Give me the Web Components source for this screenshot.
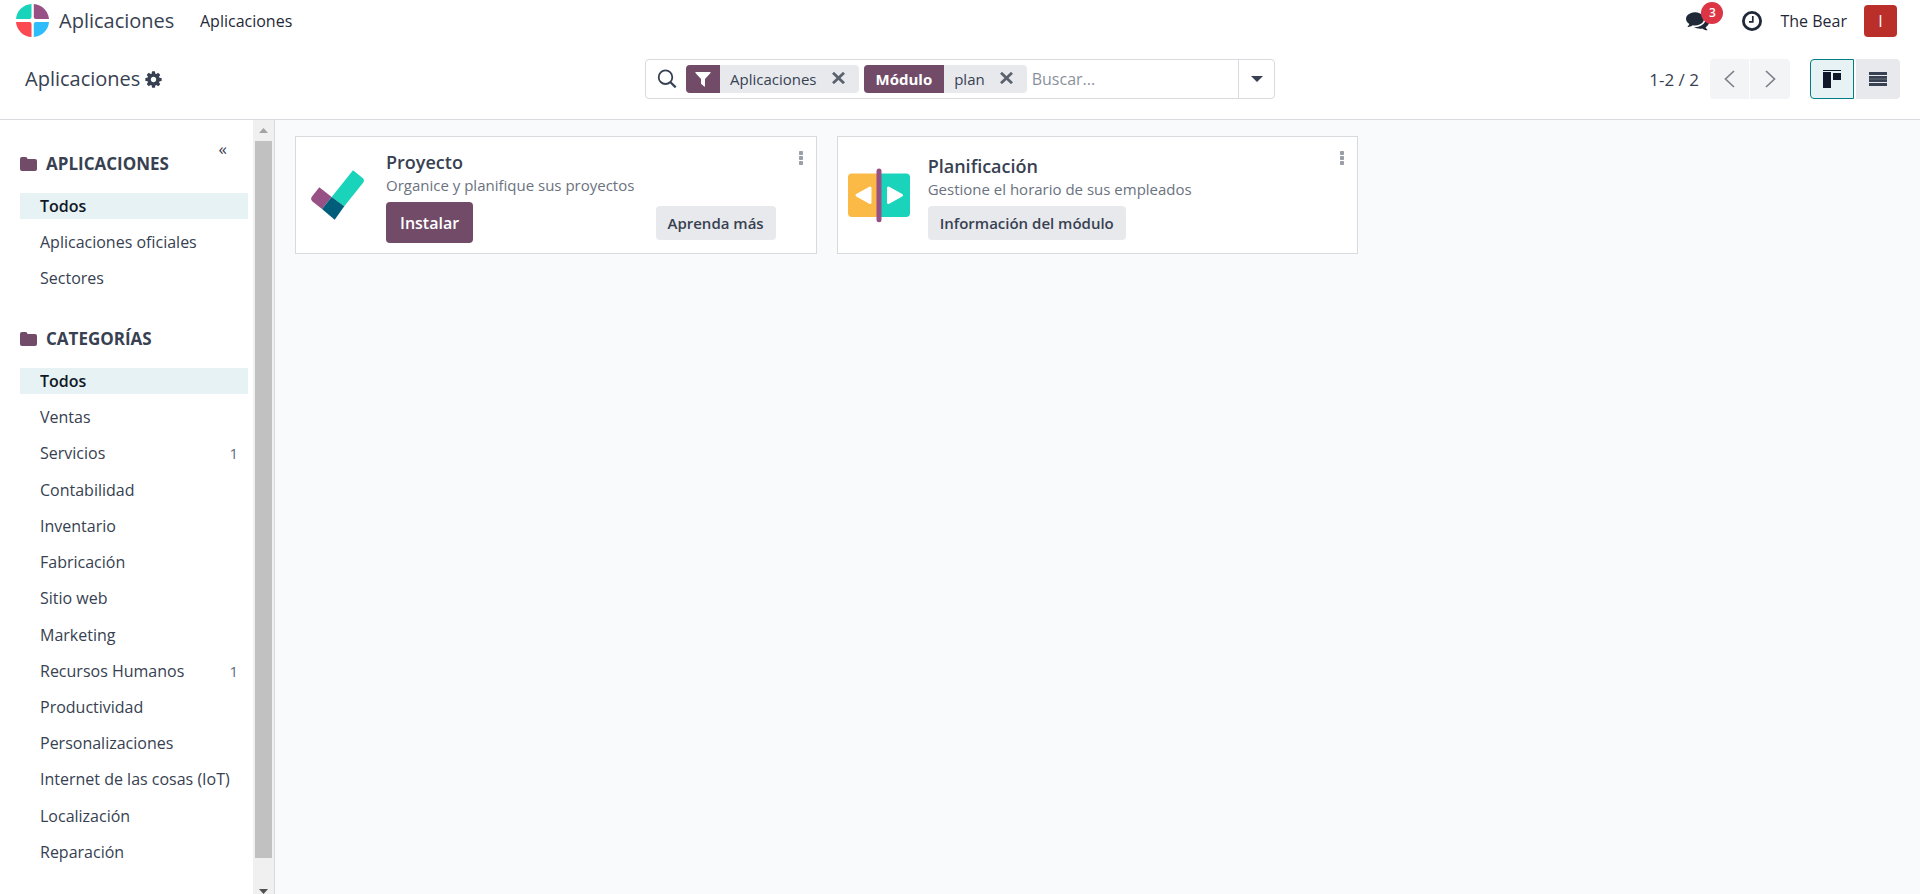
<!DOCTYPE html>
<html lang="es">
<head>
<meta charset="utf-8">
<title>Aplicaciones</title>
<style>
  body { margin: 0; font-family: "Open Sans", "Noto Sans", sans-serif; font-size: 16px; color: #374151; background: #fff; overflow: hidden; }
</style>
</head>
<body>
<apps-page></apps-page>

<script>
const BASE = `
  *, *::before, *::after { box-sizing: border-box; }
  button { font: inherit; color: inherit; border: 0; padding: 0; margin: 0; background: none; cursor: pointer; }
  a { color: inherit; text-decoration: none; }
  svg { display: block; flex: none; }
`;

function define(name, render) {
  customElements.define(name, class extends HTMLElement {
    connectedCallback() {
      if (this.shadowRoot) return;
      const root = this.attachShadow({ mode: 'open' });
      const tpl = document.createElement('template');
      tpl.innerHTML = `<style>${BASE}</style>` + render(this);
      root.append(tpl.content.cloneNode(true));
    }
  });
}

define('top-bar', () => `
  <style>
    :host { display: flex; align-items: center; height: 41px; padding: 0 23px 0 16px; color: #1f2937; }
    .logo { margin-right: 10px; }
    .brand { font-size: 20px; color: #374151; width: 141px; }
    .right { margin-left: auto; display: flex; align-items: center; }
    .chat { position: relative; margin-right: 33px; }
    .badge { position: absolute; left: 15px; top: -7px; width: 22px; height: 22px; border-radius: 50%; background: #dc3545; color: #fff; font-size: 12px; line-height: 22px; text-align: center; font-weight: 600; }
    .clock { margin-right: 18px; }
    .user { display: flex; align-items: center; gap: 17px; }
    .avatar { width: 33px; height: 32px; border-radius: 4px; background: #bb2f2a; color: #fff; line-height: 32px; text-align: center; }
  </style>
  <svg class="logo" width="33" height="33" viewBox="0 0 33 33" aria-hidden="true">
    <path fill="#1ad3bb" d="M15.500 0v13a2 2 0 0 1-2 2H0A16.500 16.500 0 0 1 15.500 0z"/>
    <path fill="#985184" d="M17.800 0v13a2 2 0 0 0 2 2H33A16.500 16.500 0 0 0 17.800 0z"/>
    <path fill="#fc4850" d="M15.500 33V20a2 2 0 0 0-2-2H0a16.500 16.500 0 0 0 15.500 15z"/>
    <path fill="#2ebcfa" d="M17.800 33V20a2 2 0 0 1 2-2H33a16.500 16.500 0 0 1-15.200 15z"/>
  </svg>
  <a class="brand" href="#">Aplicaciones</a>
  <a href="#">Aplicaciones</a>
  <div class="right">
    <button class="chat" aria-label="Conversaciones">
      <svg width="23" height="23" viewBox="0 0 1792 1792" fill="#1f2937"><path d="M1408 768q0 139-94 257t-256.500 186.500-353.500 68.500q-86 0-176-16-124 88-278 128-36 9-86 16h-3q-11 0-20.500-8t-11.500-21q-1-3-1-6.500t.5-6.500 2-6l2.500-5 3.500-5.500 4-5 4.500-5 4-4.500q5-6 23-25t26-29.500 22.500-29 25-38.500 20.500-44q-124-72-195-177t-71-224q0-139 94-257t256.500-186.500 353.500-68.500 353.500 68.500 256.500 186.500 94 257zm384 256q0 120-71 224.500t-195 176.500q10 24 20.500 44t25 38.500 22.500 29 26 29.500 23 25q1 1 4 4.500t4.500 5 4 5 3.500 5.500l2.500 5 2 6 .5 6.500-1 6.500q-3 14-13 22t-22 7q-50-7-86-16-154-40-278-128-90 16-176 16-271 0-472-132 58 4 88 4 161 0 309-45t264-129q125-92 192-212t67-254q0-77-23-152 129 71 204 178t75 230z"/></svg>
      <span class="badge">3</span>
    </button>
    <button class="clock" aria-label="Actividades">
      <svg width="20" height="20" viewBox="0 0 20 20" fill="none" stroke="#1f2937"><circle cx="10" cy="10" r="8.600" stroke-width="2.800"/><path stroke-width="1.700" d="M10.800 5v5.800H7"/></svg>
    </button>
    <a class="user" href="#"><span>The Bear</span><span class="avatar">I</span></a>
  </div>`);

define('search-facet', el => `
  <style>
    :host { display: flex; align-items: center; height: 28px; border-radius: 4px; overflow: hidden; background: #e7e9ed; font-size: 15px; line-height: 28px; }
    .label { background: #714b67; color: #fff; font-weight: 700; height: 28px; display: flex; align-items: center; padding: 0 ${el.hasAttribute('label') ? 12 : 9}px; }
    .value { padding: 0 15px 0 10px; }
    button { padding-right: 14px; align-self: flex-start; padding-top: 7px; }
  </style>
  <span class="label">${el.hasAttribute('label') ? el.getAttribute('label') : '<svg width="16" height="16" viewBox="0 0 16 16" fill="#fff"><path d="M.8 1h14.400q.8.200.3 1L10 8v7.300q-.2.600-.8.200L6.300 13 6 12.400V8L.5 2Q0 1.200.8 1z"/></svg>'}</span>
  <span class="value"><slot></slot></span>
  <button aria-label="Quitar"><svg width="13" height="12" viewBox="0 0 13 12" fill="none" stroke="#5b626e" stroke-width="2.800"><path d="M1 .8l11 10.400M12 .8L1 11.200"/></svg></button>`);

define('search-bar', () => `
  <style>
    :host { display: flex; height: 40px; border: 1px solid #d8dadd; border-radius: 4px; background: #fff; box-sizing: border-box; }
    form { flex: 1; min-width: 0; display: flex; align-items: center; gap: 5px; padding-left: 11px; margin: 0; }
    .lens { margin-right: 4px; }
    input { flex: 1; min-width: 0; border: 0; outline: 0; background: none; font: inherit; padding: 0; height: 36px; color: inherit; }
    input::placeholder { color: #8b919b; opacity: 1; }
    .toggle { width: 36px; border-left: 1px solid #d8dadd; display: grid; place-items: center; }
  </style>
  <form role="search">
    <svg class="lens" width="20" height="20" viewBox="0 0 20 20" fill="none" stroke="#374151" stroke-width="1.800"><circle cx="8.500" cy="8.200" r="6.800"/><path stroke-width="2.200" d="M13.500 13.200l5.200 5.200"/></svg>
    <search-facet>Aplicaciones</search-facet>
    <search-facet label="Módulo">plan</search-facet>
    <input type="text" placeholder="Buscar..." aria-label="Buscar">
  </form>
  <button class="toggle" aria-label="Opciones de búsqueda"><svg width="12" height="6" viewBox="0 0 12 6" fill="#374151"><path d="M0 0h12L6 6z"/></svg></button>`);

define('control-panel', () => `
  <style>
    :host { display: grid; grid-template-columns: 1fr 630px 1fr; align-items: center; height: 79px; padding: 0 20px 2px; border-bottom: 1px solid #d8dadd; box-sizing: border-box; }
    .title { display: flex; align-items: center; gap: 4px; padding-left: 5px; }
    h1 { margin: 0; font-size: 20px; font-weight: 400; line-height: 28px; }
    .right { display: flex; justify-content: flex-end; align-items: center; }
    .count { font-size: 17px; }
    .pager { display: flex; gap: 1px; margin: 0 20px 0 11px; }
    .pager button { width: 40px; height: 40px; background: #f3f4f6; display: grid; place-items: center; }
    .pager button:first-child { width: 39px; }
    .views { display: flex; gap: 2px; }
    .views button { width: 44px; height: 40px; background: #e7e9ed; display: grid; place-items: center; }
    .pager button:first-child, .views button:first-child { border-radius: 4px 0 0 4px; }
    .pager button:last-child, .views button:last-child { border-radius: 0 4px 4px 0; }
    .views .active { background: #e6f2f3; border: 1px solid #017e84; }
  </style>
  <div class="title">
    <h1>Aplicaciones</h1>
    <button aria-label="Acciones"><svg width="19" height="19" viewBox="0 0 1792 1792" fill="#374151"><path d="M1152 896q0-106-75-181t-181-75-181 75-75 181 75 181 181 75 181-75 75-181zm512-109v222q0 12-8 23t-20 13l-185 28q-19 54-39 91 35 50 107 138 10 12 10 25t-9 23q-27 37-99 108t-94 71q-12 0-26-9l-138-108q-44 23-91 38-16 136-29 186-7 28-36 28h-222q-14 0-24.500-8.500t-11.500-21.500l-28-184q-49-16-90-37l-141 107q-10 9-25 9-14 0-25-11-126-114-165-168-7-10-7-23 0-12 8-23 15-21 51-66.500t54-70.500q-27-50-41-99l-183-27q-13-2-21-12.500t-8-23.500v-222q0-12 8-23t19-13l186-28q14-46 39-92-40-57-107-138-10-12-10-24 0-10 9-23 26-36 98.500-107.500t94.500-71.500q13 0 26 10l138 107q44-23 91-38 16-136 29-186 7-28 36-28h222q14 0 24.500 8.500t11.500 21.500l28 184q49 16 90 37l142-107q9-9 24-9 13 0 25 10 129 119 165 170 7 8 7 22 0 12-8 23-15 21-51 66.500t-54 70.500q26 50 41 98l183 28q13 2 21 12.500t8 23.500z"/></svg></button>
  </div>
  <search-bar></search-bar>
  <div class="right">
    <span class="count">1-2 / 2</span>
    <div class="pager">
      <button aria-label="Anterior"><svg width="11" height="18" viewBox="0 0 11 18" fill="none" stroke="#7c818a" stroke-width="1.700"><path d="M10 1L1.500 9l8.500 8"/></svg></button>
      <button aria-label="Siguiente"><svg width="11" height="18" viewBox="0 0 11 18" fill="none" stroke="#7c818a" stroke-width="1.700"><path d="M1 1l8.500 8L1 17"/></svg></button>
    </div>
    <div class="views">
      <button class="active" aria-label="Kanban"><svg width="20" height="18" viewBox="0 0 20 18" fill="#111827"><path d="M1 0h18v1H1zM1 2h8v16H1zM11 3h8v7h-8z"/></svg></button>
      <button aria-label="Lista"><svg width="18" height="14" viewBox="0 0 18 14" fill="#374151"><path d="M0 0h18v3H0zM0 4h18v6H0zM0 11h18v3H0z"/><path fill="#4f5764" d="M0 6h18v2H0z"/></svg></button>
    </div>
  </div>`);

define('filter-item', el => `
  <style>
    :host { display: block; }
    a { display: flex; justify-content: space-between; align-items: center; height: 26px; line-height: 26px; padding: 0 10px 0 20px; white-space: nowrap; }
    :host([active]) a { background: #e6f2f3; color: #111827; font-weight: 600; }
    .count { font-size: 15px; color: #5f6b7f; }
  </style>
  <a href="#"><slot></slot>${el.hasAttribute('count') ? `<span class="count">${el.getAttribute('count')}</span>` : ''}</a>`);

define('filter-section', el => `
  <style>
    :host { display: block; }
    h2 { display: flex; align-items: center; gap: 9px; margin: 0 0 16px; font-size: 17px; line-height: 26px; font-weight: 700; text-transform: uppercase; }
    .list { display: flex; flex-direction: column; justify-content: space-between; gap: 10px; }
    :host([tall]) .list { min-height: 497px; }
  </style>
  <h2><svg width="17" height="14" viewBox="0 0 17 14" fill="#714b67"><path d="M0 2Q0 0 2 0h3.500q2 0 2 2H15q2 0 2 2v8q0 2-2 2H2q-2 0-2-2z"/></svg>${el.getAttribute('heading')}</h2>
  <div class="list"><slot></slot></div>`);

define('side-panel', () => `
  <style>
    :host { display: flex; width: 275px; border-right: 1px solid #d8dadd; background: #fff; overflow: hidden; box-sizing: border-box; }
    nav { position: relative; flex: 1; min-width: 0; display: flex; flex-direction: column; gap: 35px; padding: 31px 5px 0 20px; }
    .fold { position: absolute; top: 16px; right: 26px; font-size: 17px; line-height: 26px; }
    .bar { width: 21px; background: #f0f0f0; display: flex; flex-direction: column; align-items: center; }
    .up { height: 21px; display: grid; place-items: center; }
    .thumb { width: 17px; flex: 1; background: #c1c1c1; }
    .down { height: 36px; display: flex; align-items: flex-end; }
  </style>
  <nav aria-label="Filtros">
    <button class="fold" aria-label="Contraer">«</button>
    <filter-section heading="Aplicaciones">
      <filter-item active>Todos</filter-item>
      <filter-item>Aplicaciones oficiales</filter-item>
      <filter-item>Sectores</filter-item>
    </filter-section>
    <filter-section heading="Categorías" tall>
      <filter-item active>Todos</filter-item>
      <filter-item>Ventas</filter-item>
      <filter-item count="1">Servicios</filter-item>
      <filter-item>Contabilidad</filter-item>
      <filter-item>Inventario</filter-item>
      <filter-item>Fabricación</filter-item>
      <filter-item>Sitio web</filter-item>
      <filter-item>Marketing</filter-item>
      <filter-item count="1">Recursos Humanos</filter-item>
      <filter-item>Productividad</filter-item>
      <filter-item>Personalizaciones</filter-item>
      <filter-item>Internet de las cosas (IoT)</filter-item>
      <filter-item>Localización</filter-item>
      <filter-item>Reparación</filter-item>
    </filter-section>
  </nav>
  <div class="bar" aria-hidden="true">
    <span class="up"><svg width="9" height="5" viewBox="0 0 9 5" fill="#a3a3a3"><path d="M0 5h9L4.500 0z"/></svg></span>
    <span class="thumb"></span>
    <span class="down"><svg width="9" height="5" viewBox="0 0 9 5" fill="#505050"><path d="M0 0h9L4.500 5z"/></svg></span>
  </div>`);

define('module-card', el => `
  <style>
    :host { position: relative; display: flex; align-items: center; height: 118px; padding: 0 40px 0 10px; gap: 16px; background: #fff; border: 1px solid #d8dadd; box-sizing: border-box; }
    .info { flex: 1; min-width: 0; padding-top: 2px; }
    h3 { margin: 0; font-size: 18px; line-height: 26px; font-weight: 600; }
    p { margin: 0 0 7px; font-size: 15px; line-height: 20px; color: #6b7280; white-space: nowrap; }
    .actions { display: flex; justify-content: space-between; align-items: center; }
    .menu { position: absolute; top: 10px; right: 8px; padding: 4px 5px; }
  </style>
  <slot name="icon"></slot>
  <div class="info">
    <h3>${el.getAttribute('name')}</h3>
    <p>${el.getAttribute('summary')}</p>
    <div class="actions"><slot></slot></div>
  </div>
  <button class="menu" aria-label="Menú"><svg width="4" height="14" viewBox="0 0 4 14" fill="#9a9fa8"><rect width="4" height="4" rx=".8"/><rect y="5" width="4" height="4" rx=".8"/><rect y="10" width="4" height="4" rx=".8"/></svg></button>`);

define('action-button', () => `
  <style>
    :host { display: block; }
    button { display: block; height: 34px; padding: 0 12px; border-radius: 4px; background: #e7e9ed; font-size: 15px; font-weight: 600; white-space: nowrap; }
    :host([primary]) button { height: 41px; padding: 0 14px; background: #714b67; color: #fff; font-size: 16px; }
  </style>
  <button><slot></slot></button>`);

define('apps-page', () => `
  <style>
    :host { display: flex; flex-direction: column; height: 100vh; }
    .body { flex: 1; min-height: 0; display: flex; }
    main { flex: 1; min-width: 0; background: #f9fafb; padding: 16px 20px; display: grid; grid-template-columns: repeat(3, 1fr); gap: 20px; align-content: start; }
  </style>
  <top-bar></top-bar>
  <control-panel></control-panel>
  <div class="body">
    <side-panel></side-panel>
    <main>
      <module-card name="Proyecto" summary="Organice y planifique sus proyectos">
        <svg slot="icon" width="64" height="64" viewBox="0 0 64 64" aria-hidden="true">
          <path fill="#1ad3bb" d="M47 7.300l9.700 7.700q2.200 2.100.6 4.400L38.300 43.300 25.700 34z"/>
          <path fill="#985184" d="M13.300 24.300L25.700 34 16 46 6.500 38.500q-2.400-2.100-.7-4.700z"/>
          <path fill="#005e7a" d="M25.700 34l12.600 9.300-9.600 13.400L16 46z"/>
        </svg>
        <action-button primary>Instalar</action-button>
        <action-button>Aprenda más</action-button>
      </module-card>
      <module-card name="Planificación" summary="Gestione el horario de sus empleados">
        <svg slot="icon" width="64" height="64" viewBox="0 2 64 64" aria-hidden="true">
          <path fill="#fbb945" d="M4 12.600h27V56H4q-4 0-4-4V16.600q0-4 4-4z"/>
          <path fill="#1ad3bb" d="M31 12.600h27q4 0 4 4V52q0 4-4 4H31z"/>
          <rect x="28.500" y="7.500" width="5" height="53.700" rx="2.500" fill="#985184"/>
          <path fill="#fff" stroke="#fff" stroke-width="3" stroke-linejoin="round" d="M9 34.300l13-7.200v14.400zM53.500 34.300l-13-7.200v14.400z"/>
        </svg>
        <action-button>Información del módulo</action-button>
      </module-card>
    </main>
  </div>`);
</script>
</body>
</html>
